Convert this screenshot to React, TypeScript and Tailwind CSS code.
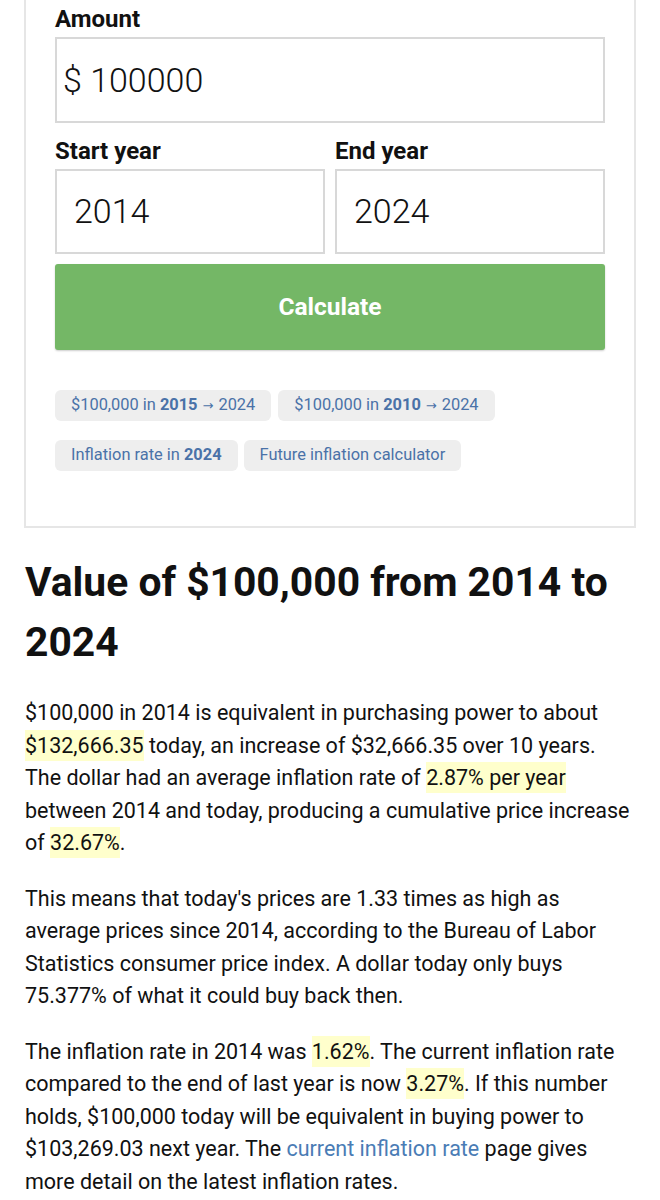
import React from 'react'

function Chip({ children }: { children: React.ReactNode }) {
  return (
    <a className="rounded-md bg-[#eeeeee] px-4 h-[31px] flex items-center text-[16.4px] text-[#4a72a8] whitespace-nowrap">
      {children}
    </a>
  )
}

function Arrow() {
  return <span className="mx-[5px] text-[13px] font-['DejaVu_Sans',sans-serif]">→</span>
}

function Mark({ children }: { children: React.ReactNode }) {
  return <span className="bg-[#ffffcc] py-[3px]">{children}</span>
}

export default function App() {
  return (
    <div className="min-h-[1200px] bg-white text-[#111] font-['Roboto',sans-serif]">
      <div className="mx-[24px] -mt-[20px] border-2 border-t-0 border-[#e6e6e6] px-[29px] pt-[23px] pb-[55px]">
        <label className="block text-[24px] font-bold leading-[32px] mb-[2px]">Amount</label>
        <div className="h-[86px] border-2 border-[#d8d8d8] flex items-center px-[6px] text-[34px] font-light">
          $ 100000
        </div>

        <div className="mt-[12px] grid grid-cols-2 gap-[10px]">
          <div>
            <label className="block text-[24px] font-bold leading-[32px] mb-[2px]">Start year</label>
            <div className="h-[85px] border-2 border-[#d8d8d8] flex items-center px-[17px] text-[34px] font-light">
              2014
            </div>
          </div>
          <div>
            <label className="block text-[24px] font-bold leading-[32px] mb-[2px]">End year</label>
            <div className="h-[85px] border-2 border-[#d8d8d8] flex items-center px-[17px] text-[34px] font-light">
              2024
            </div>
          </div>
        </div>

        <button className="mt-[10px] w-full h-[86px] rounded-[3px] bg-[#74b766] text-white text-[24.5px] font-bold shadow-[0_1px_2px_rgba(0,0,0,0.2)]">
          Calculate
        </button>

        <div className="mt-[40px] flex flex-col gap-[19px]">
          <div className="flex gap-[7px]">
            <Chip>
              $100,000 in&nbsp;<b>2015</b>
              <Arrow />
              2024
            </Chip>
            <Chip>
              $100,000 in&nbsp;<b>2010</b>
              <Arrow />
              2024
            </Chip>
          </div>
          <div className="flex gap-[6px]">
            <Chip>
              Inflation rate in&nbsp;<b>2024</b>
            </Chip>
            <Chip>Future inflation calculator</Chip>
          </div>
        </div>
      </div>

      <div className="pl-[25px] pr-[25px]">
        <h1 className="mt-[24px] text-[40.8px] font-bold leading-[60px]">
          Value of $100,000 from 2014 to 2024
        </h1>

        <p className="mt-[25px] text-[21.5px] leading-[32.5px]">
          $100,000 in 2014 is equivalent in purchasing power to about <Mark>$132,666.35</Mark> today, an
          increase of $32,666.35 over 10 years. The dollar had an average inflation rate of{' '}
          <Mark>2.87% per year</Mark> between 2014 and today, producing a cumulative price increase of{' '}
          <Mark>32.67%</Mark>.
        </p>

        <p className="mt-[23px] text-[21.5px] leading-[32.5px]">
          This means that today's prices are 1.33 times as high as average prices since 2014, according to
          the Bureau of Labor Statistics consumer price index. A dollar today only buys 75.377% of what it
          could buy back then.
        </p>

        <p className="mt-[23px] text-[21.5px] leading-[32.5px]">
          The inflation rate in 2014 was <Mark>1.62%</Mark>. The current inflation rate compared to the end
          of last year is now <Mark>3.27%</Mark>. If this number holds, $100,000 today will be equivalent in
          buying power to $103,269.03 next year. The <a className="text-[#4a7cb5]">current inflation rate</a>{' '}
          page gives more detail on the latest inflation rates.
        </p>
      </div>
    </div>
  )
}
